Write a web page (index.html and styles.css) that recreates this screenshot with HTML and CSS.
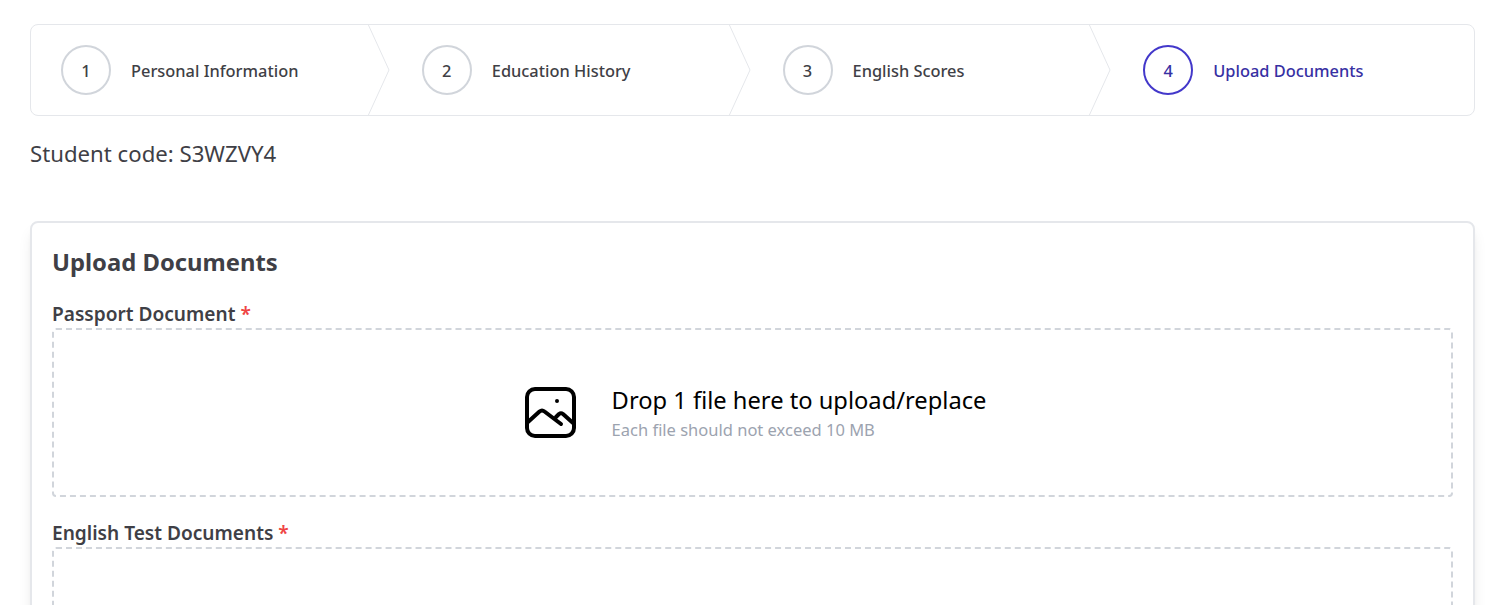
FILE: index.html
```html
<!DOCTYPE html>
<html lang="en">
<head>
	<meta charset="UTF-8">
	<title>Upload Documents</title>
	<link rel="stylesheet" href="styles.css">
</head>
<body>
	<div class="page">
		<ol class="steps">
			<li class="step">
				<span class="step-num">1</span>
				<span class="step-name">Personal Information</span>
				<svg class="step-arrow" viewBox="0 0 23 92" fill="none"><path d="M0.500 -1L22 46L0.500 93" stroke="#e5e7eb"/></svg>
			</li>
			<li class="step">
				<span class="step-num">2</span>
				<span class="step-name">Education History</span>
				<svg class="step-arrow" viewBox="0 0 23 92" fill="none"><path d="M0.500 -1L22 46L0.500 93" stroke="#e5e7eb"/></svg>
			</li>
			<li class="step">
				<span class="step-num">3</span>
				<span class="step-name">English Scores</span>
				<svg class="step-arrow" viewBox="0 0 23 92" fill="none"><path d="M0.500 -1L22 46L0.500 93" stroke="#e5e7eb"/></svg>
			</li>
			<li class="step on">
				<span class="step-num">4</span>
				<span class="step-name">Upload Documents</span>
			</li>
		</ol>
		<p class="student-code">Student code: S3WZVY4</p>
		<div class="card">
			<h2 class="card-title">Upload Documents</h2>
			<label class="field-label">Passport Document <span class="req">*</span></label>
			<div class="dropzone">
				<svg class="drop-icon" viewBox="0 0 52 52" fill="none" stroke="#000" stroke-width="4" stroke-linecap="round" stroke-linejoin="round">
					<rect x="2" y="2" width="47" height="47" rx="8"/>
					<path d="M3 35L14.500 24.500Q17 22.500 19.500 24.500L36 37"/>
					<path d="M31 30L34 27Q36 25.500 38 27L48 36"/>
					<circle cx="32" cy="14" r="1" stroke-width="2" fill="#000"/>
				</svg>
				<div class="drop-text">
					<div class="drop-title">Drop 1 file here to upload/replace</div>
					<div class="drop-hint">Each file should not exceed 10 MB</div>
				</div>
			</div>
			<label class="field-label second">English Test Documents <span class="req">*</span></label>
			<div class="dropzone"></div>
		</div>
	</div>
</body>
</html>
```

FILE: styles.css
```css
* {
	margin: 0;
	padding: 0;
	box-sizing: border-box;
}
html, body {
	height: 605px;
	overflow: hidden;
	background: #fff;
}
body {
	font-family: "Noto Sans", "Open Sans", sans-serif;
	color: #3f3f46;
}
.page {
	padding: 24px 11px 0 30px;
}
.steps {
	display: flex;
	height: 92px;
	list-style: none;
	border: 1px solid #e5e7eb;
	border-radius: 8px;
}
.step {
	position: relative;
	flex: 1 1 0;
	display: flex;
	align-items: center;
	padding-left: 30px;
	font-size: 16.400px;
	font-weight: 500;
}
.step-num {
	flex: none;
	width: 50px;
	height: 50px;
	display: flex;
	align-items: center;
	justify-content: center;
	border: 2px solid #d1d5db;
	border-radius: 50%;
	margin-right: 20px;
	padding-top: 1px;
}
.step-name {
	padding-top: 1px;
}
.step-arrow {
	position: absolute;
	top: -1px;
	right: 2px;
	width: 23px;
	height: 92px;
}
.step.on .step-num {
	border-color: #4338ca;
	color: #3730a3;
}
.step.on .step-name {
	color: #3730a3;
}
.student-code {
	margin-top: 20px;
	font-size: 22.200px;
	line-height: 36px;
}
.card {
	margin-top: 49px;
	padding: 21px 20px 20px;
	border: 2px solid #e5e7eb;
	border-radius: 8px;
	height: 600px;
	box-shadow: 0 10px 15px -3px rgba(0,0,0,.1), 0 4px 6px -4px rgba(0,0,0,.1);
}
.card-title {
	font-size: 23.800px;
	font-weight: 700;
	line-height: 36px;
	margin-bottom: 21px;
}
.field-label {
	display: block;
	font-size: 19.100px;
	font-weight: 600;
	line-height: 27px;
}
.field-label.second {
	margin-top: 23px;
}
.req {
	color: #ef4444;
}
.dropzone {
	height: 169px;
	display: flex;
	align-items: center;
	justify-content: center;
	border: 2px dashed #d1d5db;
	border-radius: 4px;
	padding: 2px 0 0 6px;
}
.drop-icon {
	flex: none;
	width: 52px;
	height: 52px;
	margin: 0 35px 1px 0;
}
.drop-title {
	font-size: 23.700px;
	line-height: 32px;
	color: #000;
}
.drop-hint {
	font-size: 16.500px;
	line-height: 26px;
	margin-top: 1px;
	color: #9ca3af;
}
```
